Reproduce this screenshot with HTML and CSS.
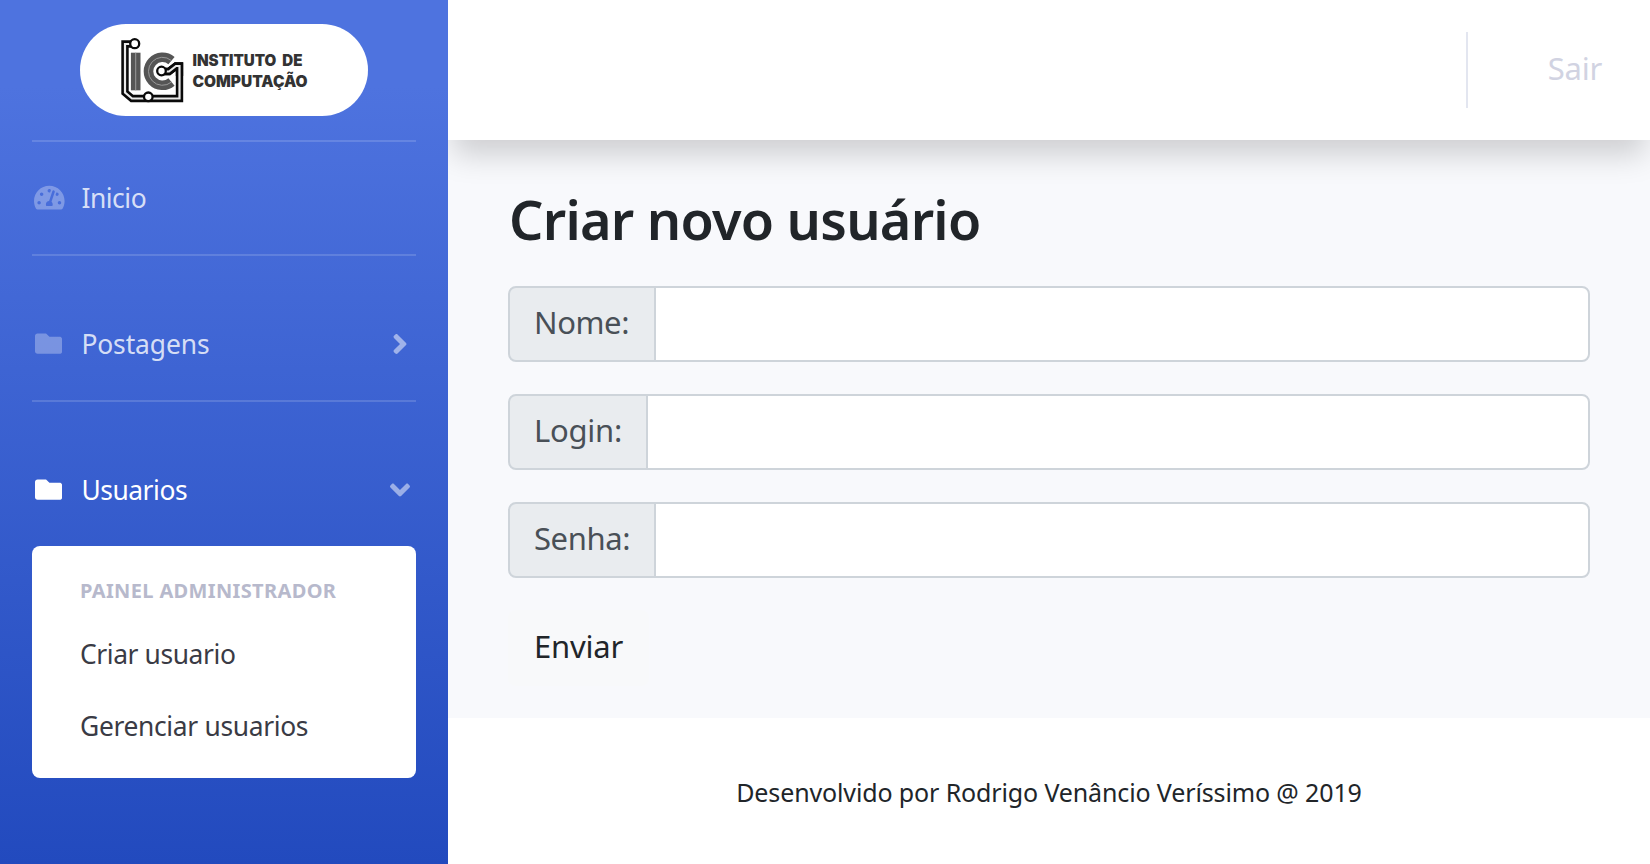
FILE: index.html
```html
<!DOCTYPE html>
<html lang="pt-br">
<head>
<meta charset="utf-8">
<title>Criar novo usuário</title>
<link rel="stylesheet" href="styles.css">
</head>
<body>
<div class="wrapper">
  <nav class="sidebar">
    <a class="brand" href="#">
      <svg class="brand-logo" viewBox="0 0 288 92" width="288" height="92">
        <g fill="none">
          <path d="M54.7 20H45v48.500l7 6H99.500V42H96l-7 5.500H82" stroke="#0a0a0a" stroke-width="7.400"/>
          <path d="M54.700 20H45v48.500l7 6H99.500V42H96l-7 5.500H82" stroke="#e9e9e9" stroke-width="2.200"/>
          <path d="M55.700 28.700V66.300" stroke="#555" stroke-width="9.600"/>
          <path d="M55.700 28.700V66.300" stroke="#999" stroke-width="1"/>
          <path d="M91.500 36.600A14 14 0 1 0 91.500 58" stroke="#555" stroke-width="9.600"/>
          <path d="M91.500 36.600A14 14 0 1 0 91.500 58" stroke="#999" stroke-width="1"/>
          <path d="M82 47.500h7l7-5.500h3.500v10" stroke="#0a0a0a" stroke-width="7.400"/>
          <path d="M82 47.500h7l7-5.500h3.500v10" stroke="#e9e9e9" stroke-width="2.200"/>
        </g>
        <g fill="#fff" stroke="#0a0a0a" stroke-width="2.300">
          <circle cx="54.700" cy="19.700" r="4.500"/>
          <circle cx="68.300" cy="72.800" r="4.300"/>
          <circle cx="81.500" cy="47" r="4.300"/>
        </g>
        <g class="brand-text">
          <text x="112.500" y="42" textLength="110" lengthAdjust="spacingAndGlyphs">INSTITUTO DE</text>
          <text x="112.500" y="63.300" textLength="115" lengthAdjust="spacingAndGlyphs">COMPUTAÇÃO</text>
        </g>
      </svg>
    </a>
    <hr class="divider">
    <a class="nav-link nav-home" href="#">
      <svg class="icon icon-gauge" viewBox="0 0 576 512"><path d="M288 32C128.940 32 0 160.940 0 320c0 52.800 14.250 102.260 39.060 144.800 5.610 9.620 16.300 15.200 27.440 15.200h443c11.140 0 21.830-5.580 27.440-15.200C561.750 422.260 576 372.800 576 320c0-159.060-128.940-288-288-288zm0 64c14.710 0 26.580 10.130 30.320 23.650-1.110 2.260-2.640 4.230-3.450 6.670l-9.220 27.670c-5.130 3.490-10.970 6.010-17.640 6.010-17.670 0-32-14.330-32-32S270.330 96 288 96zM96 384c-17.670 0-32-14.330-32-32s14.330-32 32-32 32 14.330 32 32-14.330 32-32 32zm48-160c-17.670 0-32-14.330-32-32s14.330-32 32-32 32 14.330 32 32-14.330 32-32 32zm246.770-72.410l-61.330 184C343.130 347.330 352 364.540 352 384c0 11.720-3.380 22.550-8.880 32H232.880c-5.500-9.450-8.880-20.280-8.880-32 0-33.940 26.500-61.430 59.900-63.590l61.340-184.010c4.170-12.560 17.730-19.450 30.360-15.170 12.570 4.190 19.350 17.790 15.170 30.360zm14.660 57.200l15.520-46.550c3.470-1.290 7.130-2.230 11.050-2.230 17.670 0 32 14.330 32 32s-14.330 32-32 32c-11.380-.01-20.890-6.280-26.570-15.220zM480 384c-17.670 0-32-14.330-32-32s14.330-32 32-32 32 14.330 32 32-14.330 32-32 32z"/></svg>
      <span class="t-inicio">Inicio</span>
    </a>
    <hr class="divider">
    <a class="nav-link" href="#">
      <svg class="icon" viewBox="0 0 512 512"><path d="M464 128H272l-64-64H48C21.490 64 0 85.490 0 112v288c0 26.510 21.490 48 48 48h416c26.510 0 48-21.490 48-48V176c0-26.510-21.490-48-48-48z"/></svg>
      <span class="t-post">Postagens</span>
      <svg class="arrow" width="16" height="32" viewBox="0 0 256 512"><path d="M224.300 273l-136 136c-9.400 9.400-24.600 9.400-33.900 0l-22.600-22.600c-9.400-9.400-9.400-24.600 0-33.900l96.400-96.400-96.400-96.400c-9.400-9.400-9.400-24.600 0-33.900L54.300 103c9.400-9.400 24.600-9.400 33.900 0l136 136c9.500 9.400 9.500 24.600.1 34z"/></svg>
    </a>
    <hr class="divider">
    <a class="nav-link active" href="#">
      <svg class="icon" viewBox="0 0 512 512"><path d="M464 128H272l-64-64H48C21.490 64 0 85.490 0 112v288c0 26.510 21.490 48 48 48h416c26.510 0 48-21.490 48-48V176c0-26.510-21.490-48-48-48z"/></svg>
      <span class="t-user">Usuarios</span>
      <svg class="arrow arrow-down" width="20" height="32" viewBox="0 0 320 512"><path d="M143 352.300L7 216.300c-9.400-9.400-9.400-24.600 0-33.900l22.600-22.600c9.400-9.400 24.600-9.400 33.900 0l96.400 96.400 96.400-96.400c9.400-9.400 24.600-9.400 33.900 0l22.600 22.600c9.400 9.400 9.400 24.600 0 33.900l-136 136c-9.200 9.400-24.400 9.400-33.800 0z"/></svg>
    </a>
    <div class="submenu">
      <h6 class="submenu-title">PAINEL ADMINISTRADOR</h6>
      <a class="submenu-item t-criar" href="#">Criar usuario</a>
      <a class="submenu-item t-ger" href="#">Gerenciar usuarios</a>
    </div>
  </nav>
  <div class="content">
    <header class="topbar">
      <div class="topbar-divider"></div>
      <a class="logout" href="#">Sair</a>
    </header>
    <main class="main">
      <h1 class="title"><span>Criar novo usuário</span></h1>
      <form>
        <div class="group"><label class="label label-nome" for="nome">Nome:</label><input class="input" id="nome" type="text"></div>
        <div class="group"><label class="label label-login" for="login">Login:</label><input class="input" id="login" type="text"></div>
        <div class="group"><label class="label label-senha" for="senha">Senha:</label><input class="input" id="senha" type="password"></div>
        <button class="submit" type="button">Enviar</button>
      </form>
    </main>
    <footer class="footer"><span>Desenvolvido por Rodrigo Venâncio Veríssimo @ 2019</span></footer>
  </div>
</div>
</body>
</html>
```
FILE: styles.css
```css
* { box-sizing: border-box; }
body {
  margin: 0;
  font-family: "Noto Sans", "Open Sans", sans-serif;
  font-size: 31px;
  line-height: 48px;
  color: #212529;
  background: #fff;
}
a { text-decoration: none; color: inherit; }
.wrapper { display: flex; height: 864px; overflow: hidden; }

.sidebar {
  width: 448px;
  flex: none;
  padding: 24px 32px 0;
  background: linear-gradient(180deg, #4e73df 10%, #224abe 100%);
  color: rgba(255, 255, 255, .8);
  font-size: 26.400px;
}
.brand {
  display: block;
  width: 288px;
  height: 92px;
  margin: 0 auto 24px;
  border-radius: 46px;
  background: #fff;
}
.brand-logo { display: block; }
.brand-text { font: 900 15.500px Inter, sans-serif; word-spacing: 3px; fill: #333; }
.divider { height: 2px; margin: 0; border: 0; background: rgba(255, 255, 255, .15); }
.nav-link {
  display: flex;
  align-items: center;
  height: 144px;
  padding: 32px 6px 0 3px;
}
.nav-home { height: 112px; padding: 0 0 0 2px; }
.icon { width: 27.200px; height: 27.200px; margin-right: 19.200px; fill: rgba(255, 255, 255, .3); }
.icon-gauge { width: 30.600px; margin-right: 16.800px; }
.t-inicio { letter-spacing: -.450px; }
.t-post { letter-spacing: -.100px; }
.t-user { letter-spacing: -.450px; }
.arrow { margin: 0 2px 0 auto; fill: rgba(255, 255, 255, .5); }
.arrow-down { margin-right: 0; }
.active { color: #fff; }
.active .icon { fill: #fff; }
.submenu {
  height: 232px;
  padding: 32px 48px;
  border-radius: 8px;
  background: #fff;
  color: #3a3b45;
}
.submenu-title { margin: 0; font-size: 20px; line-height: 26px; font-weight: 700; letter-spacing: .360px; color: #b7b9cc; }
.submenu-item { display: block; line-height: 40px; margin-top: 32px; letter-spacing: -.330px; }
.t-criar { margin-top: 30px; letter-spacing: -.400px; }

.content { flex: 1; min-width: 0; display: flex; flex-direction: column; }
.topbar {
  flex: none;
  display: flex;
  align-items: center;
  justify-content: flex-end;
  height: 140px;
  padding-right: 48px;
  box-shadow: 0 20px 28px -5px rgba(0, 0, 0, .17);
  clip-path: inset(0 0 -80px 0);
  z-index: 1;
  background: #fff;
}
.topbar-divider { width: 2px; height: 76px; background: #e3e6f0; margin-right: 80px; }
.logout { margin-top: -4px; letter-spacing: -.250px; color: #d1d3e2; }
.main { height: 578px; flex: none; padding: 46px 60px 0; background: #f8f9fc; }
.title { margin: 0 0 34px; padding-left: 1px; font-size: 54px; line-height: 66px; font-weight: 600; letter-spacing: -.750px; }
.group { display: flex; height: 76px; margin-bottom: 32px; }
.label {
  padding: 10px 24px;
  border: 2px solid #ced4da;
  border-radius: 8px 0 0 8px;
  background: #e9ecef;
  color: #495057;
  width: 148px;
  letter-spacing: -.400px;
  white-space: nowrap;
}
.label-login { width: 140px; letter-spacing: -.250px; }
.input {
  flex: 1;
  min-width: 0;
  margin-left: -2px;
  border: 2px solid #ced4da;
  border-radius: 0 8px 8px 0;
  background: #fff;
}
.submit {
  display: block;
  height: 76px;
  padding: 0 26px 4px;
  border: 0;
  border-radius: 8px;
  background: #f8f9fa;
  color: #212529;
  font: inherit;
  letter-spacing: -.200px;
}
.footer { flex: 1; padding-top: 50px; text-align: center; font-size: 25px; letter-spacing: -.130px; }
```
